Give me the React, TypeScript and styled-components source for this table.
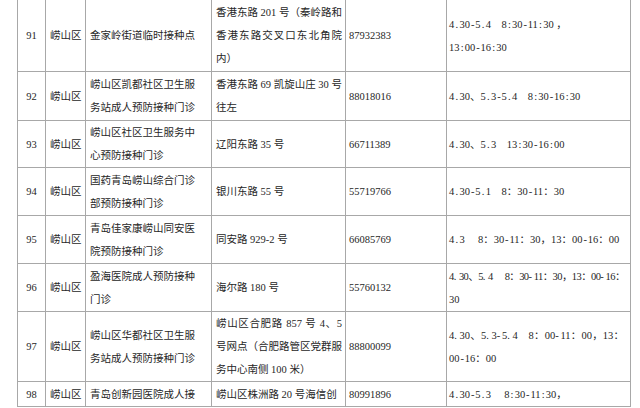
import React from 'react';
import styled, { createGlobalStyle } from 'styled-components';

interface IRow {
  no: string;
  height: number;
  name: string[];
  addr: string[];
  tel: string;
  time: string[];
  timeJustify?: boolean;
  timeTight?: boolean;
}

// cell heights between the 1px rules
const rows: IRow[] = [
  {
    no: '91',
    height: 71,
    name: ['金家岭街道临时接种点'],
    addr: ['香港东路 201 号（秦岭路和', '香港东路交叉口东北角院', '内）'],
    tel: '87932383',
    time: ['4.30-5.4　8:30-11:30 ，', '13:00-16:30'],
  },
  {
    no: '92',
    height: 48,
    name: ['崂山区凯都社区卫生服', '务站成人预防接种门诊'],
    addr: ['香港东路 69 凯旋山庄 30 号', '往左'],
    tel: '88018016',
    time: ['4.30、5.3-5.4　8:30-16:30'],
  },
  {
    no: '93',
    height: 46,
    name: ['崂山区社区卫生服务中', '心预防接种门诊'],
    addr: ['辽阳东路 35 号'],
    tel: '66711389',
    time: ['4.30、5.3　13:30-16:00'],
  },
  {
    no: '94',
    height: 47,
    name: ['国药青岛崂山综合门诊', '部预防接种门诊'],
    addr: ['银川东路 55 号'],
    tel: '55719766',
    time: ['4.30-5.1　8：30-11：30'],
  },
  {
    no: '95',
    height: 47,
    name: ['青岛佳家康崂山同安医', '院预防接种门诊'],
    addr: ['同安路 929-2 号'],
    tel: '66085769',
    time: ['4.3　 8：30-11：30，13：00-16：00'],
  },
  {
    no: '96',
    height: 47,
    name: ['盈海医院成人预防接种', '门诊'],
    addr: ['海尔路 180 号'],
    tel: '55760132',
    time: ['4.30、5.4　 8：30-11：30，13：00-16：', '30'],
    timeJustify: true,
    timeTight: true,
  },
  {
    no: '97',
    height: 69,
    name: ['崂山区华都社区卫生服', '务站成人预防接种门诊'],
    addr: ['崂山区合肥路 857 号 4、5', '号网点（合肥路管区党群服', '务中心南侧 100 米）'],
    tel: '88800099',
    time: ['4.30、5.3-5.4　8：00-11：00，13：', '00-16：00'],
    timeJustify: true,
  },
  {
    no: '98',
    height: 24,
    name: ['青岛创新园医院成人接'],
    addr: ['崂山区株洲路 20 号海信创'],
    tel: '80991896',
    time: ['4.30-5.3　 8:30-11:30，'],
  },
];

// half-width punctuation of the time column takes one digit cell
const renderTime = (text: string) =>
  text
    .split('')
    .map((ch, i) => ('.:-'.includes(ch) ? <Half key={i}>{ch}</Half> : ch));

const Lines = ({
  lines,
  justify,
  time,
  tight,
}: {
  lines: string[];
  justify?: boolean;
  time?: boolean;
  tight?: boolean;
}) => (
  <>
    {lines.map((line, i) => {
      const wrapped = !!justify && i < lines.length - 1;
      return (
        <Line key={i} $justify={wrapped} $tight={!!tight && wrapped}>
          {time ? renderTime(line) : line}
        </Line>
      );
    })}
  </>
);

const App = () => (
  <>
    <GlobalStyle />
    <Sheet>
      {rows.map((row) => (
        <Row key={row.no} $h={row.height}>
          <Cell $center>{row.no}</Cell>
          <Cell $center>崂山区</Cell>
          <Cell>
            <Lines lines={row.name} />
          </Cell>
          <Cell $pad="0 3px 0 4px">
            <Lines lines={row.addr} justify />
          </Cell>
          <Cell $pad="0 3px 0 3px">{row.tel}</Cell>
          <Cell $pad="0 6px 0 2px">
            <Lines
              lines={row.time}
              justify={row.timeJustify}
              tight={row.timeTight}
              time
            />
          </Cell>
        </Row>
      ))}
    </Sheet>
  </>
);

export default App;

const GlobalStyle = createGlobalStyle`
  html, body {
    margin: 0;
    padding: 0;
    background: #ffffff;
  }
  body {
    width: 640px;
    height: 408px;
    overflow: hidden;
    font-family: "Liberation Serif", "Noto Sans CJK SC", serif;
    font-size: 10.5px;
    color: #262626;
  }
`;

const Sheet = styled.div`
  display: flex;
  flex-direction: column;
  gap: 1px;
  width: 614px;
  margin-left: 17px;
  padding: 0 1px 1px;
  box-sizing: border-box;
  background: #a8a8a8;
`;

const Row = styled.div<{ $h: number }>`
  display: grid;
  grid-template-columns: 27px 39px 125px 133px 100px 183px;
  grid-template-rows: minmax(0, 1fr);
  gap: 1px;
  height: ${(p) => p.$h}px;
  flex: none;
`;

const Cell = styled.div<{ $center?: boolean; $pad?: string }>`
  display: flex;
  flex-direction: column;
  justify-content: center;
  padding: ${(p) => p.$pad || '0 4px 0 4px'};
  background: #ffffff;
  line-height: 23px;
  white-space: nowrap;
  text-align: ${(p) => (p.$center ? 'center' : 'left')};
  min-width: 0;
  min-height: 0;
  overflow: hidden;
`;

const Line = styled.div<{ $justify: boolean; $tight: boolean }>`
  text-align: ${(p) => (p.$justify ? 'justify' : 'inherit')};
  text-align-last: ${(p) => (p.$justify ? 'justify' : 'auto')};
  letter-spacing: ${(p) => (p.$tight ? '-0.6px' : 'normal')};
`;

const Half = styled.span`
  display: inline-block;
  width: 0.5em;
  text-align: center;
`;
